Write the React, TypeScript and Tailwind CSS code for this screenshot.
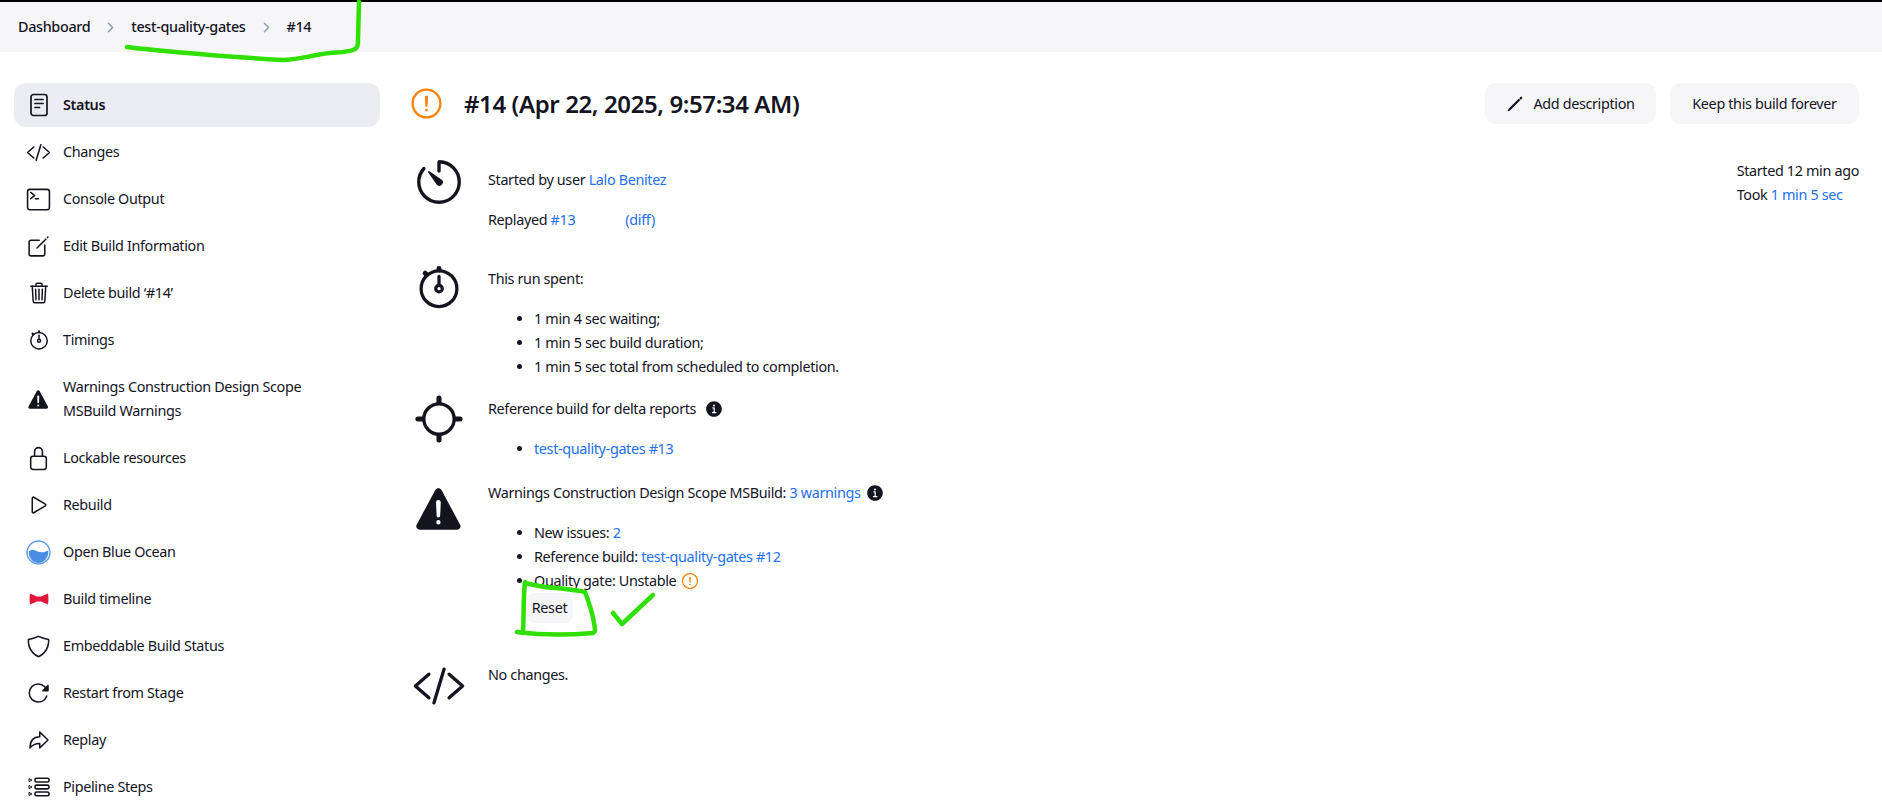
import React from "react";
import {
  IoChevronForward, IoCodeSlashOutline, IoTerminalOutline, IoCreateOutline, IoTrashOutline, IoStopwatchOutline,
  IoWarning, IoLockClosedOutline, IoPlayOutline, IoShieldOutline, IoReloadOutline, IoArrowRedoOutline,
  IoPencilOutline, IoTimerOutline, IoLocateOutline, IoInformationCircle, IoAlertCircleOutline,
} from "react-icons/io5";

const StatusIcon = () => (
  <svg viewBox="0 0 24 24" className="w-[24px] h-[24px]" fill="none" stroke="currentColor" strokeWidth="1.7" strokeLinecap="round" strokeLinejoin="round">
    <rect x="4" y="1.5" width="16" height="21" rx="2.5" />
    <path d="M8 6.5h8M8 10.5h8M8 14.5h4.5" />
  </svg>
);
const OceanIcon = () => (
  <svg viewBox="0 0 24 24" className="w-[25px] h-[25px]">
    <circle cx="12" cy="12" r="11" fill="#fff" stroke="#5b9be8" strokeWidth="1.4" />
    <path d="M2.6 11c3-2.2 5.5-1.2 8.5 0 3.5 1.2 6.500 .8 10.300-1 .6 6.500-4 12-9.400 12S2.400 17 2.600 11z" fill="#4a8fe4" />
  </svg>
);
const BowIcon = () => (
  <svg viewBox="0 0 24 24" className="w-[24px] h-[24px]" fill="#e0173a">
    <path d="M3 6.500l7 3h4l7-3c.6 3.500.6 7.500 0 11l-7-3h-4l-7 3c-.6-3.500-.6-7.500 0-11z" />
  </svg>
);
const StepsIcon = () => (
  <svg viewBox="0 0 24 24" className="w-[24px] h-[24px]" fill="none" stroke="currentColor" strokeWidth="1.6">
    <rect x="8" y="3.200" width="14" height="3.800" rx="1.600" />
    <rect x="8" y="10.100" width="14" height="3.800" rx="1.600" />
    <rect x="8" y="17" width="14" height="3.800" rx="1.600" />
    <path d="M2 3.500l3 1.600-3 1.600zM2 10.400L5 12l-3 1.600zM2 17.300l3 1.600-3 1.600z" strokeWidth="1" strokeLinejoin="round" />
  </svg>
);

const nav: { label: React.ReactNode; icon: React.ReactNode; active?: boolean; tall?: boolean }[] = [
  { label: "Status", icon: <StatusIcon />, active: true },
  { label: "Changes", icon: <IoCodeSlashOutline size={25} /> },
  { label: "Console Output", icon: <IoTerminalOutline size={25} /> },
  { label: "Edit Build Information", icon: <IoCreateOutline size={25} /> },
  { label: "Delete build ‘#14’", icon: <IoTrashOutline size={24} /> },
  { label: "Timings", icon: <IoStopwatchOutline size={24} /> },
  { label: <>Warnings Construction Design Scope<br />MSBuild Warnings</>, icon: <IoWarning size={27} />, tall: true },
  { label: "Lockable resources", icon: <IoLockClosedOutline size={25} /> },
  { label: "Rebuild", icon: <IoPlayOutline size={24} /> },
  { label: "Open Blue Ocean", icon: <OceanIcon /> },
  { label: "Build timeline", icon: <BowIcon /> },
  { label: "Embeddable Build Status", icon: <IoShieldOutline size={25} /> },
  { label: "Restart from Stage", icon: <IoReloadOutline size={24} /> },
  { label: "Replay", icon: <IoArrowRedoOutline size={24} /> },
  { label: "Pipeline Steps", icon: <StepsIcon /> },
];

const A = ({ children }: { children: React.ReactNode }) => <a className="text-[#1d70f2]">{children}</a>;

export default function App() {
  return (
    <div className="relative h-[803px] overflow-hidden bg-white text-[#14141f] text-[14.4px] leading-[24px] font-['Noto_Sans','Open_Sans',sans-serif] tracking-[-0.35px]">
      <header className="h-[52px] border-t-2 border-black bg-[#f6f6f8] flex items-center pl-[18px] font-medium">
        <span>Dashboard</span>
        <IoChevronForward size={15} className="mx-[13px] text-[#8d99ae]" />
        <span>test-quality-gates</span>
        <IoChevronForward size={15} className="mx-[13px] text-[#8d99ae]" />
        <span>#14</span>
      </header>

      <div className="flex pt-[31px]">
        <nav className="ml-[14px] w-[366px] shrink-0 flex flex-col gap-[3px]">
          {nav.map((n, i) => (
            <div key={i} className={`flex items-center rounded-[12px] pl-[12px] ${n.tall ? "h-[68px]" : "h-[44px]"} ${n.active ? "bg-[#ecedf2] font-semibold" : ""}`}>
              <span className="w-[25px] flex justify-center shrink-0">{n.icon}</span>
              <span className="ml-[12px]">{n.label}</span>
            </div>
          ))}
        </nav>

        <main className="ml-[31px] flex-1 pr-[23px]">
          <div className="flex items-center h-[41px]">
            <IoAlertCircleOutline size={37} className="text-[#fe820a] -ml-[3px]" />
            <h1 className="ml-[19px] text-[24px] font-semibold tracking-[-0.4px]">#14 (Apr 22, 2025, 9:57:34 AM)</h1>
            <div className="ml-auto flex gap-[14px]">
              <button className="h-[41px] w-[171px] rounded-[10px] bg-[#f6f6f8] flex items-center justify-center gap-[9px]">
                <IoPencilOutline size={18} />
                Add description
              </button>
              <button className="h-[41px] w-[189px] rounded-[10px] bg-[#f6f6f8]">Keep this build forever</button>
            </div>
          </div>

          <div className="flex justify-between mt-[36px]">
            <div>
              <section className="flex">
                <span className="w-[56px] flex justify-center -mt-[5px] h-[56px]"><IoTimerOutline size={54} /></span>
                <div className="ml-[21px]">
                  <p className="mt-[8px]">Started by user <A>Lalo Benitez</A></p>
                  <p className="mt-[16px]">Replayed <A>#13</A><span className="ml-[50px]"><A>(diff)</A></span></p>
                </div>
              </section>

              <section className="flex mt-[35px]">
                <span className="w-[56px] flex justify-center -mt-[6px] h-[56px]"><IoStopwatchOutline size={52} /></span>
                <div className="ml-[21px]">
                  <p>This run spent:</p>
                  <ul className="mt-[16px] ml-[30px] list-disc pl-[16px]">
                    <li>1 min 4 sec waiting;</li>
                    <li>1 min 5 sec build duration;</li>
                    <li>1 min 5 sec total from scheduled to completion.</li>
                  </ul>
                </div>
              </section>

              <section className="flex mt-[18px]">
                <span className="w-[56px] flex justify-center -mt-[5px] h-[56px]"><IoLocateOutline size={54} /></span>
                <div className="ml-[21px]">
                  <p className="flex items-center">Reference build for delta reports<IoInformationCircle size={20} className="ml-[8px]" /></p>
                  <ul className="mt-[16px] ml-[30px] list-disc pl-[16px]">
                    <li><A>test-quality-gates #13</A></li>
                  </ul>
                </div>
              </section>

              <section className="flex mt-[20px]">
                <span className="w-[56px] flex justify-center -mt-[2px] h-[56px]"><IoWarning size={60} /></span>
                <div className="ml-[21px]">
                  <p className="flex items-center">Warnings Construction Design Scope MSBuild:&nbsp;<A>3 warnings</A><IoInformationCircle size={20} className="ml-[4px]" /></p>
                  <ul className="mt-[16px] ml-[30px] list-disc pl-[16px]">
                    <li>New issues: <A>2</A></li>
                    <li>Reference build: <A>test-quality-gates #12</A></li>
                    <li><span className="inline-flex items-center">Quality gate: Unstable<IoAlertCircleOutline size={20} className="ml-[4px] text-[#fe820a]" /></span></li>
                  </ul>
                  <button className="ml-[38px] mt-[0px] h-[30px] w-[47px] rounded-[8px] bg-[#f6f6f8]">Reset</button>
                </div>
              </section>

              <section className="flex mt-[40px]">
                <span className="w-[56px] flex justify-center -mt-[4px] h-[56px]"><IoCodeSlashOutline size={54} /></span>
                <p className="ml-[21px]">No changes.</p>
              </section>
            </div>

            <div className="-mt-[1px]">
              <p>Started 12 min ago</p>
              <p>Took <A>1 min 5 sec</A></p>
            </div>
          </div>
        </main>
      </div>

      <svg className="absolute left-0 top-0 w-[1882px] h-[803px] pointer-events-none" viewBox="0 0 1882 803" fill="none" stroke="#2fe000" strokeWidth="4.500" strokeLinecap="round" strokeLinejoin="round">
        <path d="M127 47C150 50 165 51 187 53C220 56 250 58 283 60C295 60 305 57 317 55C330 52 345 53 353 50C358 48 358 45 358 40L359 2" />
        <path d="M525 582C523 600 524 615 523 633L517 632C540 635 570 635 593 633C596 632 595 628 594 623C592 610 588 600 585 592C575 590 565 589 557 588C545 588 535 585 525 583" />
        <path d="M613 613L622 624L653 595" />
      </svg>
    </div>
  );
}
